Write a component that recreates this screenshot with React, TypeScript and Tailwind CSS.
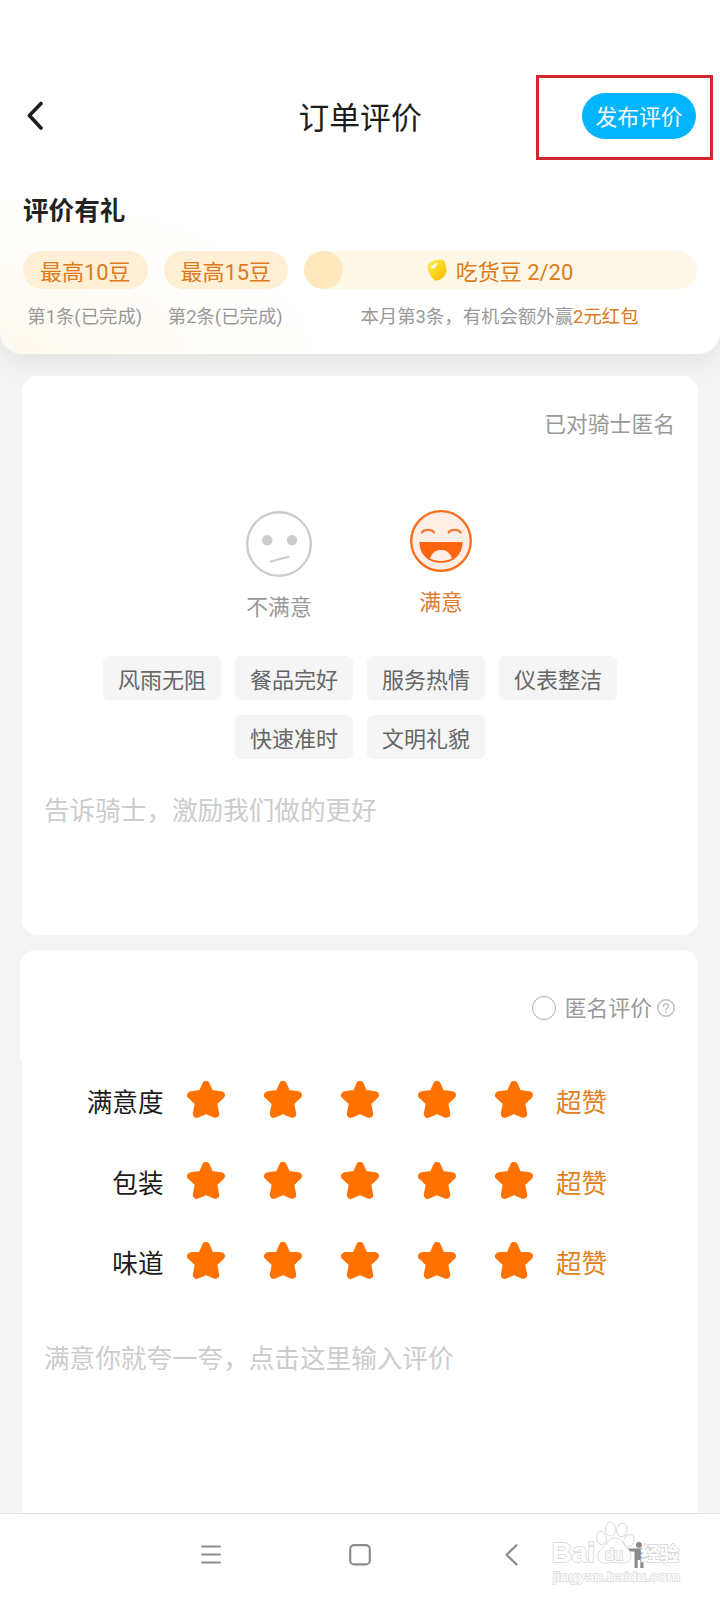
import { useState } from 'react';
import clsx from 'clsx';

const TAG_ROWS = [
  ['风雨无阻', '餐品完好', '服务热情', '仪表整洁'],
  ['快速准时', '文明礼貌'],
];

const RATINGS = ['满意度', '包装', '味道'];

const REWARDS = [
  { amount: '最高10豆', label: '第1条(已完成)' },
  { amount: '最高15豆', label: '第2条(已完成)' },
];

function Star() {
  return (
    <svg viewBox="0 0 38 37" className="w-[38px] h-[37px]">
      <path
        d="M19 4 L22.8 12.8 L33.9 14.2 L26 21.6 L28.2 32.8 L19 28.8 L9.8 32.8 L12 21.6 L4.1 14.2 L15.2 12.8 Z"
        fill="#ff7200"
        stroke="#ff7200"
        strokeWidth="8"
        strokeLinejoin="round"
      />
    </svg>
  );
}

function SadFace() {
  return (
    <svg viewBox="0 0 66 66" className="w-[66px] h-[66px]" fill="none">
      <circle cx="33" cy="33" r="31.8" stroke="#cccccc" strokeWidth="2.4" />
      <circle cx="21.3" cy="29.3" r="5.2" fill="#cccccc" />
      <circle cx="46" cy="29.3" r="5.2" fill="#cccccc" />
      <path d="M24.8 50.5 L42.6 45.8" stroke="#cccccc" strokeWidth="2.2" strokeLinecap="round" />
    </svg>
  );
}

function HappyFace() {
  return (
    <svg viewBox="0 0 62 62" className="w-[62px] h-[62px]" fill="none">
      <circle cx="31" cy="31" r="29.8" fill="#ffeee5" stroke="#f96d1b" strokeWidth="2.3" />
      <path d="M12 22.5 C14 18.9 22 18.9 24 22.5 M38.6 22.5 C40.6 18.9 48.6 18.9 50.6 22.5" stroke="#f17a36" strokeWidth="2.2" strokeLinecap="round" />
      <path d="M9.5 32 H52.5 C52.5 45 43.5 52.8 31 52.8 C18.5 52.8 9.5 45 9.5 32 Z" fill="#ff6510" />
      <path d="M20 48.5 C22 42.5 26 40 31 40 C36 40 40 42.5 42 48.5 C36 51.7 26 51.7 20 48.5 Z" fill="#ffeee5" />
    </svg>
  );
}

function Bean() {
  return (
    <svg viewBox="0 0 20 22" className="w-5 h-[22px]">
      <defs>
        <linearGradient id="bean" x1="0" y1="0" x2="1" y2="1">
          <stop offset="0" stopColor="#fff05a" />
          <stop offset="0.55" stopColor="#fed319" />
          <stop offset="1" stopColor="#f9b400" />
        </linearGradient>
      </defs>
      <path d="M3.5 3 C7 .8 12 .2 15.3 .7 C17.3 1 17.8 2.6 18.5 5.5 C19.2 9 20.2 12.5 18.5 15.2 C16.5 18.3 13.5 21.2 10 21.6 C7 21.9 5.5 19.5 4 17 C2.5 14.5 1 12 .6 9 C.2 6 1.2 4.3 3.5 3 Z" fill="url(#bean)" />
      <path d="M4.3 7.5 C5.5 5.2 8.5 3.8 11.5 4.2 C9.5 5.5 9 8.5 6 9.5 C4.5 10 3.8 8.8 4.3 7.5 Z" fill="#fff" opacity="0.85" />
    </svg>
  );
}

function Watermark() {
  return (
    <div className="absolute left-[552px] top-[1520px] w-[130px] h-[68px] text-white pointer-events-none">
      <svg viewBox="0 0 130 68" className="w-[130px] h-[68px]" fill="#fff" stroke="#dcdcdc" strokeWidth="1">
        <ellipse cx="49.5" cy="18" rx="5" ry="6.7" transform="rotate(-12 49.5 18)" />
        <ellipse cx="58.5" cy="9" rx="5" ry="7" />
        <ellipse cx="70" cy="10" rx="5.2" ry="6.8" transform="rotate(12 70 10)" />
        <ellipse cx="77" cy="20.5" rx="5" ry="6.2" transform="rotate(25 77 20.5)" />
        <path d="M63 18 C70 18 71 25 76 29 C81 34 80 42 73 43 C69 43.5 67 42.5 62 42.5 C57 42.5 55 43.5 51 43 C45 42 44 34 49 29.5 C55 25 56 18 63 18 Z" />
        <g fontFamily="'Liberation Sans', 'Noto Sans CJK SC', sans-serif" fontWeight="700" strokeWidth="1.8" paintOrder="stroke">
          <text x="0" y="42" fontSize="27" textLength="43" lengthAdjust="spacingAndGlyphs">Bai</text>
          <text x="53" y="40" fontSize="16" fontWeight="400">du</text>
          <text x="89" y="41" fontSize="19" textLength="38">经验</text>
          <text x="1" y="60.5" fontSize="13.5" fontWeight="400" stroke="#e2e2e2" textLength="127" lengthAdjust="spacingAndGlyphs">jingyan.baidu.com</text>
        </g>
      </svg>
    </div>
  );
}

export default function App() {
  const [satisfied, setSatisfied] = useState(true);

  return (
    <div className="relative w-[720px] h-[1600px] flex flex-col overflow-hidden bg-[#f4f4f4] font-[Roboto,'Noto_Sans_CJK_SC',sans-serif]">
      {/* Header and rewards */}
      <div className="relative z-10 h-[354px] shrink-0 rounded-b-[22px] bg-[radial-gradient(340px_170px_at_bottom_left,#fffaf0_0%,#ffffff_100%)] shadow-[0_8px_26px_rgba(90,85,75,0.1)]">
        <header className="h-[160px] pt-[74px] pl-[27px] pr-[7px] grid grid-cols-[178px_1fr_177px] items-center">
          <button className="-mt-[3px]">
            <svg viewBox="0 0 16 30" className="w-4 h-[30px]" fill="none" stroke="#1c1c1c" strokeWidth="3.6" strokeLinecap="round" strokeLinejoin="round">
              <path d="M14 2.5 L2.4 14.6 L14 27" />
            </svg>
          </button>
          <h1 className="pl-[93.5px] -mr-10 pt-1 text-[30.8px] leading-[40px] text-[#1c1c1c] whitespace-nowrap">订单评价</h1>
          <div className="mt-px h-[85px] border-[3px] border-[#d3262e] pt-[15px] pr-[14px] flex justify-end">
            <button className="w-[114px] h-[46px] rounded-full bg-[#01b4fe] text-white text-[21.8px] leading-[49px]">发布评价</button>
          </div>
        </header>

        <h2 className="pl-[23px] mt-[31px] text-[25.6px] leading-[40px] font-bold text-[#222]">评价有礼</h2>

        <div className="mt-[20px] pl-[23px] pr-[23px] flex gap-4 text-center">
          {REWARDS.map((reward) => (
            <div key={reward.label} className="w-[124.5px] shrink-0">
              <div className="h-[38px] rounded-full bg-[#ffefd4] text-[22px] leading-[43px] text-[#dd7a20]">{reward.amount}</div>
              <p className="mt-[14px] -ml-px text-[18.4px] leading-[28px] text-[#999] whitespace-nowrap">{reward.label}</p>
            </div>
          ))}
          <div className="flex-1">
            <div className="h-[38px] rounded-full bg-[#fff8e8] flex">
              <div className="w-[39px] h-[38px] rounded-full bg-[#ffe7be]" />
              <div className="flex-1 pr-[40px] flex items-center justify-center gap-[9px] text-[22px] leading-[38px] text-[#dd7a20]">
                <Bean />
                <span className="pt-[5px]">吃货豆 2/20</span>
              </div>
            </div>
            <p className="mt-[14px] -ml-0.5 text-[18.4px] leading-[28px] text-[#999] whitespace-nowrap">
              本月第3条，有机会额外赢<span className="text-[#dd7a20]">2元红包</span>
            </p>
          </div>
        </div>
      </div>

      {/* Rider review */}
      <section className="relative z-20 mx-[22px] mt-[22px] h-[559px] shrink-0 rounded-[15px] bg-white">
        <p className="pt-[33px] pr-[23px] text-right text-[21.8px] leading-[32px] text-[#999]">已对骑士匿名</p>

        <div className="mt-[69px] h-[122px] pl-[224px] flex">
          <button onClick={() => setSatisfied(false)} className="w-[66px] flex flex-col items-center pt-px">
            <SadFace />
            <span className="mt-[15px] text-[21.8px] leading-[32px] text-[#999] whitespace-nowrap">不满意</span>
          </button>
          <button onClick={() => setSatisfied(true)} className="ml-[98px] w-[62px] flex flex-col items-center">
            <HappyFace />
            <span className={clsx('mt-[15px] text-[21.8px] leading-[32px]', satisfied ? 'text-[#e27b2c]' : 'text-[#999]')}>满意</span>
          </button>
        </div>

        <div className="mt-[24px] flex flex-col gap-[15px]">
          {TAG_ROWS.map((row) => (
            <div key={row[0]} className="flex justify-center gap-[14.7px]">
              {row.map((tag) => (
                <button key={tag} className="w-[117.3px] h-[44px] rounded-[6px] bg-[#f5f5f5] text-[22px] leading-[49px] text-[#666]">
                  {tag}
                </button>
              ))}
            </div>
          ))}
        </div>

        <p className="mt-[32px] pl-[22px] text-[25.6px] leading-[40px] text-[#ccc]">告诉骑士，激励我们做的更好</p>
      </section>

      {/* Shop review */}
      <section className="relative mx-[22px] mt-[15px] h-[563px] shrink-0 rounded-t-[15px] bg-white">
        <div className="-ml-0.5 h-[110px] rounded-tl-[16px] rounded-tr-[15px] bg-white pt-[42px] pr-[23px] flex justify-end items-start">
          <div className="flex items-center h-8">
            <span className="w-6 h-6 rounded-full border border-[#aaa]" />
            <span className="ml-[9px] pt-0.5 text-[21.8px] leading-[32px] text-[#999]">匿名评价</span>
            <svg viewBox="0 0 18 18" className="ml-[5px] w-[18px] h-[18px]" fill="none" stroke="#bbb" strokeWidth="1.4" strokeLinecap="round">
              <circle cx="9" cy="9" r="8.2" />
              <path d="M6.5 7.2 C6.6 5.6 7.7 4.8 9 4.8 C10.4 4.8 11.5 5.7 11.5 7 C11.5 8.6 9 8.8 9 10.6" />
              <path d="M9 13 V13.1" strokeWidth="1.8" />
            </svg>
          </div>
        </div>

        <div className="mt-[21px]">
          {RATINGS.map((name) => (
            <div key={name} className="h-[80.5px] flex items-start">
              <span className="w-[141.5px] pt-0.5 text-right text-[25.6px] leading-[40px] text-[#1c1c1c]">{name}</span>
              <div className="ml-[23.5px] flex gap-[39px]">
                {[1, 2, 3, 4, 5].map((n) => (
                  <Star key={n} />
                ))}
              </div>
              <span className="ml-[23px] pt-0.5 text-[25.6px] leading-[40px] text-[#e0811f]">超赞</span>
            </div>
          ))}
        </div>

        <p className="mt-[16px] pl-[22px] text-[25.6px] leading-[40px] text-[#ccc]">满意你就夸一夸，点击这里输入评价</p>
      </section>

      {/* System navigation */}
      <nav className="h-[87px] shrink-0 border-t border-[#e2e2e2] bg-white flex items-start pl-[201px] pt-[30px] text-[#8b8b8b]">
        <svg viewBox="0 0 20 22" className="w-5 h-[22px]" stroke="currentColor" strokeWidth="2" strokeLinecap="round">
          <path d="M1 2.5 H19 M1 10.5 H19 M1 18.5 H19" />
        </svg>
        <svg viewBox="0 0 22 22" className="ml-32 w-[22px] h-[22px]" fill="none" stroke="currentColor" strokeWidth="2.2">
          <rect x="1.2" y="1.2" width="19.6" height="19.2" rx="4" />
        </svg>
        <svg viewBox="0 0 13 22" className="ml-[134px] w-[13px] h-[22px]" fill="none" stroke="currentColor" strokeWidth="2.2" strokeLinecap="round" strokeLinejoin="round">
          <path d="M11.5 1.2 L1.5 10.8 L11.5 20.4" />
        </svg>
        <svg viewBox="0 0 24 28" className="ml-[109px] -mt-[3px] w-6 h-7" fill="currentColor">
          <circle cx="12" cy="4" r="3" />
          <path d="M0 7.5 H24 V10.5 H16.5 V27 H13.3 V19 H10.7 V27 H7.5 V10.5 H0 Z" />
        </svg>
      </nav>

      <Watermark />
    </div>
  );
}
